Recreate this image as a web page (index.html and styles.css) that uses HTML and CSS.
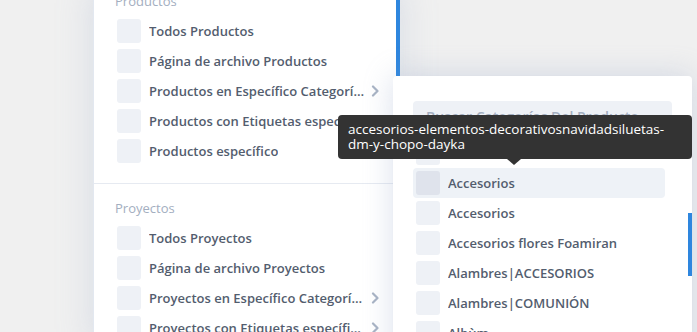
FILE: index.html
```html
<!DOCTYPE html>
<html lang="es">
<head>
<meta charset="utf-8">
<link rel="stylesheet" href="styles.css">
</head>
<body>
<div class="stage">
  <div class="panel">
    <div class="panel-scroll">
      <section class="group first">
        <div class="group-title">Productos</div>
        <div class="row"><span class="box"></span><span class="label">Todos Productos</span></div>
        <div class="row"><span class="box"></span><span class="label">Página de archivo Productos</span></div>
        <div class="row"><span class="box"></span><span class="label">Productos en Específico Categorías del Producto</span><svg class="chev" viewBox="0 0 8 12"><path d="M2 1.5 6.5 6 2 10.5" /></svg></div>
        <div class="row"><span class="box"></span><span class="label">Productos con Etiquetas específicas</span><svg class="chev" viewBox="0 0 8 12"><path d="M2 1.5 6.5 6 2 10.5" /></svg></div>
        <div class="row"><span class="box"></span><span class="label">Productos específico</span></div>
      </section>
      <section class="group">
        <div class="group-title">Proyectos</div>
        <div class="row"><span class="box"></span><span class="label">Todos Proyectos</span></div>
        <div class="row"><span class="box"></span><span class="label">Página de archivo Proyectos</span></div>
        <div class="row"><span class="box"></span><span class="label">Proyectos en Específico Categorías del Proyecto</span><svg class="chev" viewBox="0 0 8 12"><path d="M2 1.5 6.5 6 2 10.5" /></svg></div>
        <div class="row"><span class="box"></span><span class="label">Proyectos con Etiquetas específicas</span><svg class="chev" viewBox="0 0 8 12"><path d="M2 1.5 6.5 6 2 10.5" /></svg></div>
      </section>
    </div>
    <div class="panel-bar"></div>
  </div>

  <div class="popup">
    <div class="search">Buscar Categorías Del Producto</div>
    <div class="list">
      <div class="prow"><span class="box"></span><span class="label">Accesorios</span></div>
      <div class="prow hover"><span class="box"></span><span class="label">Accesorios</span></div>
      <div class="prow"><span class="box"></span><span class="label">Accesorios</span></div>
      <div class="prow"><span class="box"></span><span class="label">Accesorios flores Foamiran</span></div>
      <div class="prow"><span class="box"></span><span class="label">Alambres|ACCESORIOS</span></div>
      <div class="prow"><span class="box"></span><span class="label">Alambres|COMUNIÓN</span></div>
      <div class="prow"><span class="box"></span><span class="label">Albùm</span></div>
    </div>
    <div class="popup-bar"></div>
  </div>

  <div class="tooltip">accesorios-elementos-decorativosnavidadsiluetas-<br>dm-y-chopo-dayka</div>
</div>
</body>
</html>
```

FILE: styles.css
```css
html, body {
  margin: 0;
  padding: 0;
  width: 697px;
  height: 332px;
  overflow: hidden;
  background: #f0f0f0;
  font-family: "Open Sans", "Noto Sans", sans-serif;
}

.stage {
  position: relative;
  width: 697px;
  height: 332px;
  overflow: hidden;
  display: flex;
  padding-left: 94px;
  box-sizing: border-box;
}

.panel {
  width: 306px;
  height: 360px;
  margin-top: -14px;
  display: flex;
  background: #fff;
  border-left: 1px solid #e3e8f0;
  margin-left: -1px;
  box-shadow: 0 0 34px rgba(150, 168, 200, 0.28);
}

.panel-scroll {
  flex: 1;
}

.panel-bar {
  width: 4px;
  height: 90px;
  background: #2e86de;
}

.group {
  padding: 9px 0 17px 21px;
  border-bottom: 1px solid #e6eaf1;
}

.group.first {
  padding-top: 0;
}

.group-title {
  height: 30px;
  line-height: 30px;
  font-size: 13px;
  color: #a3aec0;
  font-weight: 400;
}

.row {
  height: 30px;
  display: flex;
  align-items: center;
  padding-left: 2px;
  width: 262px;
}

.box {
  flex: none;
  width: 24px;
  height: 24px;
  border-radius: 3px;
  background: #eef1f6;
  margin-right: 8px;
}

.label {
  font-size: 13px;
  font-weight: 600;
  color: #535d6e;
  white-space: nowrap;
  overflow: hidden;
  text-overflow: ellipsis;
  min-width: 0;
}

.row .label {
  max-width: 218px;
}

.chev {
  flex: none;
  width: 8px;
  height: 12px;
  margin-left: 4px;
  fill: none;
  stroke: #a8b3c4;
  stroke-width: 2.2;
  stroke-linecap: round;
  stroke-linejoin: round;
}

.popup {
  position: absolute;
  left: 393px;
  top: 76px;
  width: 299px;
  height: 300px;
  background: #fff;
  border-radius: 4px;
  box-shadow: 0 0 30px rgba(140, 160, 195, 0.32);
  padding: 25px 0 0 20px;
  box-sizing: border-box;
}

.search {
  width: 259px;
  height: 32px;
  line-height: 32px;
  background: #eef1f6;
  border-radius: 4px;
  padding-left: 13px;
  box-sizing: border-box;
  font-size: 14px;
  color: #a3aec0;
  font-weight: 600;
  white-space: nowrap;
  overflow: hidden;
}

.list {
  margin-top: 5px;
  width: 252px;
}

.prow {
  height: 30px;
  display: flex;
  align-items: center;
  padding-left: 3px;
  border-radius: 4px;
}

.prow.hover {
  background: #eef2f7;
}

.prow.hover .box {
  background: #dfe3ec;
}

.popup-bar {
  position: absolute;
  right: 0;
  top: 137px;
  width: 4px;
  height: 63px;
  background: #2e86de;
}

.tooltip {
  position: absolute;
  left: 338px;
  top: 115px;
  width: 354px;
  box-sizing: border-box;
  padding: 7px 10px;
  background: #333;
  color: #fff;
  border-radius: 4px;
  font-size: 13.5px;
  line-height: 15px;
  font-weight: 400;
}

.tooltip::after {
  content: "";
  position: absolute;
  left: 169px;
  bottom: -6px;
  border-left: 7px solid transparent;
  border-right: 7px solid transparent;
  border-top: 6px solid #333;
}
```
